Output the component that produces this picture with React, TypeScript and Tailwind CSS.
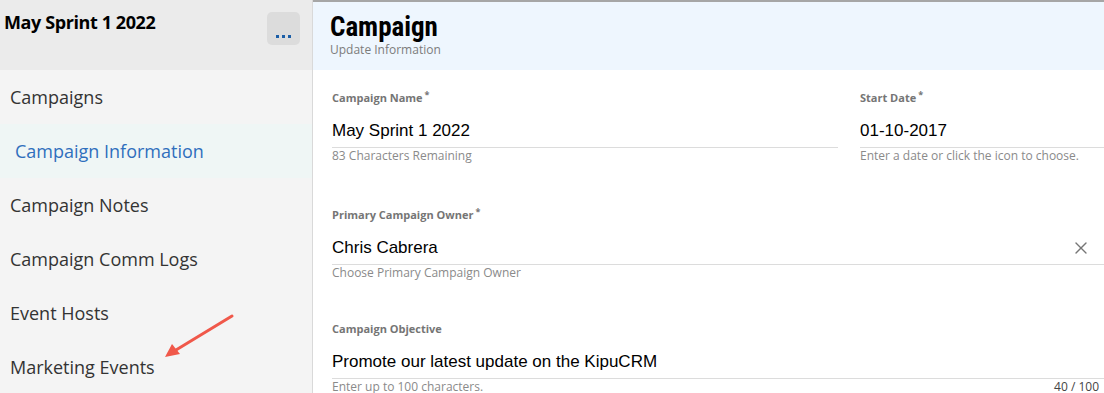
import { X } from "lucide-react";

const NAV_ITEMS = [
  "Campaigns",
  "Campaign Information",
  "Campaign Notes",
  "Campaign Comm Logs",
  "Event Hosts",
  "Marketing Events",
];

const ACTIVE = "Campaign Information";

const uiFont = "font-['Open_Sans','Lato',sans-serif]";
const inputFont = "font-['Liberation_Sans',Arial,sans-serif]";

function Label({ text, required }: { text: string; required?: boolean }) {
  return (
    <div className={`${uiFont} text-[11px] leading-[14px] font-bold text-[#757575]`}>
      {text}
      {required && <sup className="ml-[2px] text-[9px] font-bold">*</sup>}
    </div>
  );
}

function Sidebar() {
  return (
    <aside className="relative w-[313px] shrink-0 bg-[#f4f4f4] border-r border-[#d9d9d9]">
      {/* header */}
      <div className="h-[70px] bg-[#ebebeb] flex items-start justify-between pl-[4px] pr-[12px]">
        <h2 className={`${uiFont} mt-[10px] text-[18px] leading-[24px] font-bold tracking-[-0.4px] text-black`}>
          May Sprint 1 2022
        </h2>
        <button className="mt-[12px] w-[33px] h-[33px] rounded-[5px] bg-[#dcdcdc] flex items-end justify-center pb-[7px]">
          <span className="flex gap-[3px]">
            <span className="w-[3px] h-[3px] bg-[#1b5ea7]" />
            <span className="w-[3px] h-[3px] bg-[#1b5ea7]" />
            <span className="w-[3px] h-[3px] bg-[#1b5ea7]" />
          </span>
        </button>
      </div>

      {/* nav */}
      <nav>
        {NAV_ITEMS.map((item) => {
          const active = item === ACTIVE;
          return (
            <div
              key={item}
              className={`h-[54px] flex items-center ${uiFont} text-[18px] ${
                active ? "bg-[#eff6f5] text-[#2f6fbd] pl-[15px]" : "text-[#333] pl-[10px]"
              }`}
            >
              {item}
            </div>
          );
        })}
      </nav>

      {/* annotation arrow */}
      <svg className="absolute left-0 top-0 pointer-events-none" width="313" height="393">
        <line x1="232" y1="316" x2="176" y2="350" stroke="#f0584a" strokeWidth="3" strokeLinecap="round" />
        <polygon points="165,357 172,344 180,354" fill="#f0584a" />
      </svg>
    </aside>
  );
}

export default function App() {
  return (
    <div className="w-[1104px] h-[393px] overflow-hidden flex bg-white">
      <Sidebar />

      <main className="flex-1 min-w-0">
        <header className="h-[70px] bg-[#eef6fe] border-t-2 border-[#a6a6a6] pl-[17px] pt-[10px]">
          <h1 className="font-['Liberation_Sans_Narrow','Roboto_Condensed',Arial,sans-serif] text-[27px] leading-[30px] font-bold text-black">
            Campaign
          </h1>
          <p className={`${uiFont} text-[12px] leading-[16px] text-[#7c7c7c]`}>Update Information</p>
        </header>

        <div className="pl-[19px]">
          {/* row 1 */}
          <div className="grid grid-cols-[506px_1fr] gap-x-[22px] pt-[21px]">
            <div>
              <Label text="Campaign Name" required />
              <div className={`mt-[14px] pb-[4px] border-b border-[#dcdcdc] ${inputFont} text-[17px] leading-[24px] text-black`}>
                May Sprint 1 2022
              </div>
              <p className={`${uiFont} text-[12px] leading-[16px] text-[#8a8a8a]`}>83 Characters Remaining</p>
            </div>
            <div>
              <Label text="Start Date" required />
              <div className={`mt-[14px] pb-[4px] border-b border-[#dcdcdc] ${inputFont} text-[17px] leading-[24px] text-black`}>
                01-10-2017
              </div>
              <p className={`${uiFont} text-[12px] leading-[16px] text-[#8a8a8a]`}>
                Enter a date or click the icon to choose.
              </p>
            </div>
          </div>

          {/* row 2 */}
          <div className="pt-[44px]">
            <Label text="Primary Campaign Owner" required />
            <div className={`mt-[14px] pb-[4px] border-b border-[#dcdcdc] flex items-center justify-between ${inputFont} text-[17px] leading-[24px] text-black`}>
              <span>Chris Cabrera</span>
              <X className="mr-[13px] text-[#767676]" size={20} strokeWidth={1.6} />
            </div>
            <p className={`${uiFont} text-[12px] leading-[16px] text-[#8a8a8a]`}>Choose Primary Campaign Owner</p>
          </div>

          {/* row 3 */}
          <div className="pt-[41px]">
            <Label text="Campaign Objective" />
            <div className={`mt-[14px] pb-[4px] border-b border-[#dcdcdc] ${inputFont} text-[17px] leading-[24px] text-black`}>
              Promote our latest update on the KipuCRM
            </div>
            <div className={`flex justify-between pr-[5px] ${uiFont} text-[12px] leading-[16px]`}>
              <span className="text-[#8a8a8a]">Enter up to 100 characters.</span>
              <span className="text-[#444]">40 / 100</span>
            </div>
          </div>
        </div>
      </main>
    </div>
  );
}
